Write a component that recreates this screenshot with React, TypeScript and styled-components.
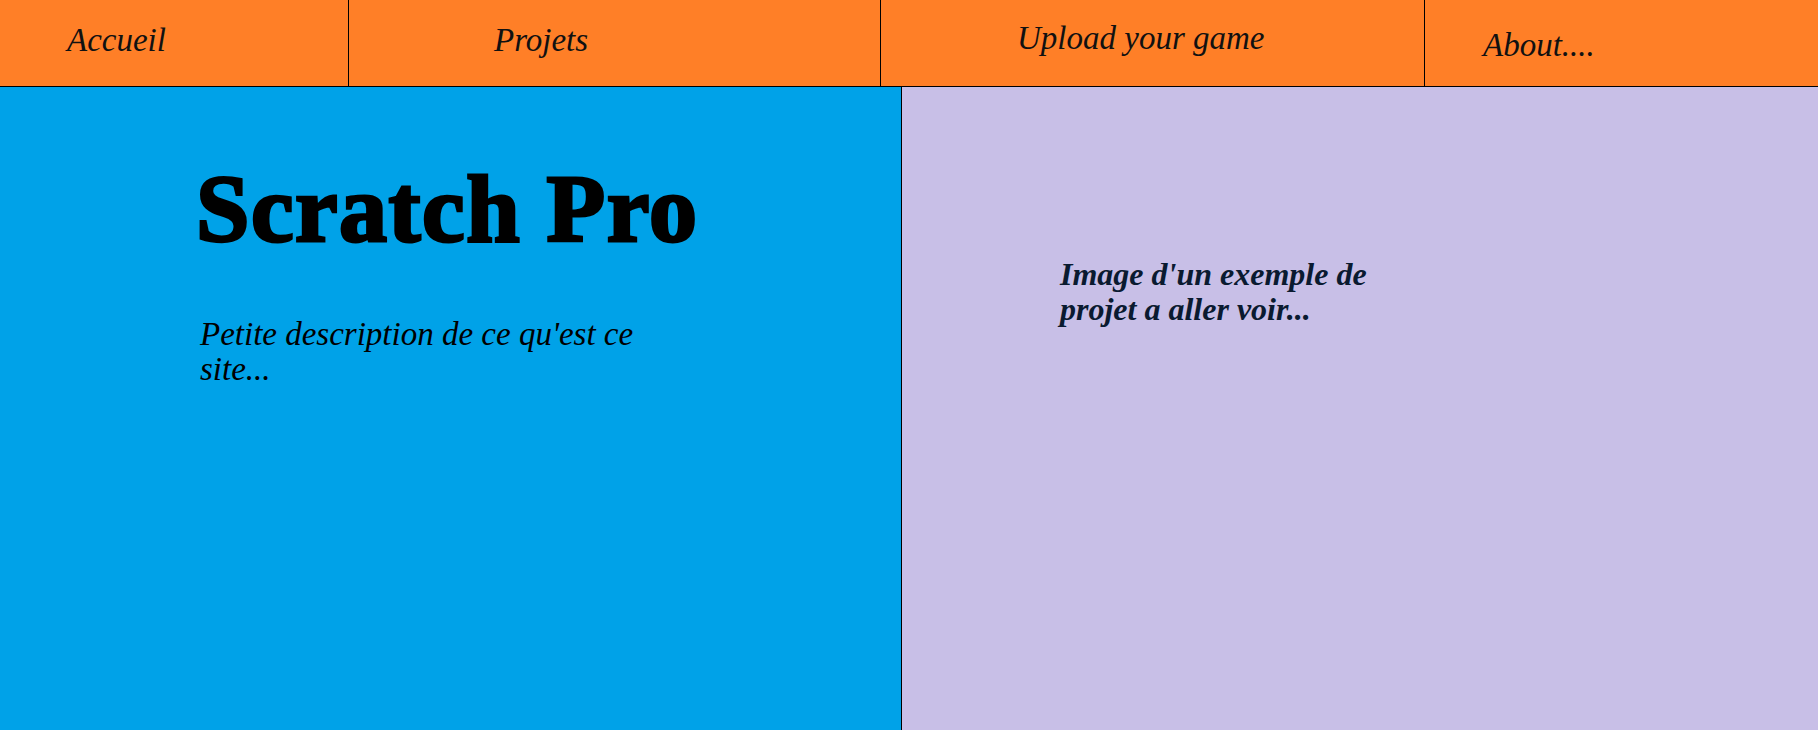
import React from "react";
import styled, { createGlobalStyle } from "styled-components";

const Global = createGlobalStyle`
  html, body { margin: 0; padding: 0; }
  body { width: 1818px; height: 730px; overflow: hidden; background: #c8bfe7; }
  #root { width: 1818px; height: 730px; }
`;

const Page = styled.div`
  display: flex;
  flex-direction: column;
  width: 1818px;
  height: 730px;
`;

const NavBar = styled.nav`
  display: flex;
  height: 86px;
  background: #ff7f27;
  border-bottom: 1px solid #000;
  flex-shrink: 0;
`;

const NavCell = styled.div<{ $w: number; $pl: number; $pt: number; $last?: boolean }>`
  width: ${(p) => p.$w}px;
  flex-shrink: 0;
  box-sizing: border-box;
  padding-left: ${(p) => p.$pl}px;
  padding-top: ${(p) => p.$pt}px;
  border-right: ${(p) => (p.$last ? "none" : "1px solid #000")};
  ${(p) => (p.$last ? "flex: 1;" : "")}
`;

const NavLink = styled.a`
  font-family: "Liberation Serif", "DejaVu Serif", serif;
  font-style: italic;
  font-size: 33px;
  line-height: 1;
  color: #111;
  text-decoration: none;
  white-space: nowrap;
`;

const Body = styled.main`
  display: flex;
  flex: 1;
`;

const LeftPanel = styled.section`
  width: 902px;
  flex-shrink: 0;
  background: #00a2e8;
  border-right: 1px solid #000;
  box-sizing: border-box;
  padding-top: 73px;
`;

const Title = styled.h1`
  margin: 0 0 0 196px;
  font-family: "Liberation Serif", "DejaVu Serif", serif;
  font-weight: 700;
  font-size: 96px;
  line-height: 97px;
  color: #000;
  -webkit-text-stroke: 3px #000;
  letter-spacing: 1.5px;
  white-space: nowrap;
`;

const Description = styled.p`
  margin: 60px 0 0 200px;
  width: 470px;
  font-family: "Liberation Serif", "DejaVu Serif", serif;
  font-style: italic;
  font-size: 33px;
  line-height: 35px;
  color: #000;
`;

const RightPanel = styled.section`
  flex: 1;
  background: #c8bfe7;
  padding-top: 170px;
  padding-left: 158px;
`;

const Caption = styled.p`
  margin: 0;
  width: 350px;
  font-family: "Liberation Serif", "DejaVu Serif", serif;
  font-style: italic;
  font-weight: 700;
  font-size: 32px;
  line-height: 35px;
  color: #0a1a30;
`;

const links = [
  { label: "Accueil", w: 349, pl: 67, pt: 24 },
  { label: "Projets", w: 532, pl: 145, pt: 24 },
  { label: "Upload your game", w: 544, pl: 136, pt: 22 },
  { label: "About....", w: 393, pl: 58, pt: 29 },
];

export default function App() {
  return (
    <>
      <Global />
      <Page>
        <NavBar>
          {links.map((l, i) => (
            <NavCell key={l.label} $w={l.w} $pl={l.pl} $pt={l.pt} $last={i === links.length - 1}>
              <NavLink href="#">{l.label}</NavLink>
            </NavCell>
          ))}
        </NavBar>
        <Body>
          <LeftPanel>
            <Title>Scratch Pro</Title>
            <Description>Petite description de ce qu'est ce site...</Description>
          </LeftPanel>
          <RightPanel>
            <Caption>Image d'un exemple de projet a aller voir...</Caption>
          </RightPanel>
        </Body>
      </Page>
    </>
  );
}
